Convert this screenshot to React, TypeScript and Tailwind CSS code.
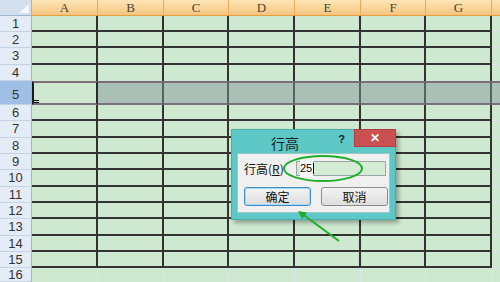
// Excel 2007 sheet with the 行高 (row height) dialog open over it
import React from "react";

const COLS = ["A", "B", "C", "D", "E", "F", "G"];
const COL_W = ["w-[66px]", "w-[66px]", "w-[65px]", "w-[66px]", "w-[66px]", "w-[65px]", "w-[66px]"];
const ROW_H = [
  "h-[16px]", "h-[16px]", "h-[17px]", "h-[16px]", "h-[24px]", "h-[16px]", "h-[17px]", "h-[16px]",
  "h-[16px]", "h-[17px]", "h-[16px]", "h-[16px]", "h-[17px]", "h-[16px]", "h-[16px]", "h-[14px]",
];

// ─── cell borders: A1:G15 has black borders, row 5 is selected and being resized ───
function cellClass(r: number, c: number) {
  const isH = c === 7;
  if (r === 4) {
    if (c === 0)
      return "relative bg-[#cfe9d0] border-l-2 border-l-[#1a1a1a] border-r-2 border-r-[#2a2a2a] border-t-2 border-t-[#7b6f7e] border-b-2 border-b-[#7b6f7e]";
    if (isH) return "bg-[#aabfb6] border-t-2 border-t-[#7b6f7e] border-b-2 border-b-[#7b6f7e]";
    return "bg-[#aabfb6] border-r-2 border-r-[#56645b] border-t-2 border-t-[#7b6f7e] border-b-2 border-b-[#7b6f7e]";
  }
  if (r === 3) return isH ? "bg-[#cfe9d0]" : "bg-[#cfe9d0] border-r-2 border-r-[#333]";
  if (r === 15) return isH ? "bg-[#cfe9d0]" : "bg-[#cfe9d0] border-r border-r-[#dde3ea]";
  return isH
    ? "bg-[#cfe9d0] border-b border-b-[#dde3ea]"
    : "bg-[#cfe9d0] border-r-2 border-b-2 border-[#333]";
}

function HeaderRow() {
  return (
    <div className="flex h-[16px]">
      <div className="relative w-[32px] shrink-0 bg-[#d3dfee] border-r border-b border-[#9eb6ce]">
        <svg className="absolute right-[2px] bottom-[2px]" width="10" height="9" viewBox="0 0 10 9">
          <polygon points="10,0 10,9 0,9" fill="#f4f7fb" />
        </svg>
      </div>
      {COLS.map((c, i) => (
        <div
          key={c}
          className={`${COL_W[i]} shrink-0 flex items-center justify-center bg-linear-to-b from-[#fde6b8] to-[#f6c47f] border-r border-r-[#eaaa58] border-b border-b-[#e49f3e] font-['Liberation_Serif'] text-[13px] text-[#4a4536]`}
        >
          {c}
        </div>
      ))}
      <div className="flex-1 bg-linear-to-b from-[#fde6b8] to-[#f6c47f] border-b border-b-[#e49f3e]" />
    </div>
  );
}

function Dialog() {
  return (
    <div className="absolute left-[231px] top-[129px] w-[165px] h-[91px] flex flex-col bg-[#5dc8c5] border border-[#46aeab] shadow-[3px_3px_4px_rgba(0,0,0,0.3)] font-['Noto_Sans_CJK_SC',sans-serif]">
      {/* title bar */}
      <div className="h-[23px] flex items-start">
        <div className="flex-1 pl-[39px] pt-[5px] text-[14px] leading-[16px] text-[#1e1e1e]">行高</div>
        <div className="pt-[3px] mr-[9px] font-['Liberation_Sans'] text-[11px] leading-[12px] font-bold text-[#1e1e1e]">?</div>
        <div className="-mt-px -mr-px w-[42px] h-[18px] flex items-center justify-center bg-[#c94f50] border border-[#b04040] text-white font-['Liberation_Sans'] text-[12px] font-bold leading-none">
          ✕
        </div>
      </div>

      {/* body */}
      <div className="mx-[5px] mb-[6px] flex-1 bg-[#f0f0f0] border border-[#9cc7c6] pl-[6px] pt-[7px]">
        <div className="flex items-center h-[15px]">
          <div className="w-[52px] text-[12px] leading-[14px] text-[#111]">
            行高(<span className="underline">R</span>)
          </div>
          <div className="w-[90px] h-[15px] flex items-center pl-[3px] bg-[#d3ecd3] border border-[#9aa6a6] font-['Liberation_Sans'] text-[11px] text-black">
            <span className="bg-white pr-px">25</span>
            <span className="w-px h-[11px] bg-black" />
          </div>
        </div>
        <div className="flex gap-[10px] mt-[11px]">
          <div className="w-[67px] h-[19px] flex items-center justify-center rounded-[3px] border border-[#3c8fd0] shadow-[inset_0_0_0_1px_#a9d8f6] bg-linear-to-b from-[#f4f4f4] to-[#dddddd] text-[12px] text-[#111]">
            确定
          </div>
          <div className="w-[67px] h-[19px] flex items-center justify-center rounded-[3px] border border-[#8c8c8c] bg-linear-to-b from-[#f4f4f4] to-[#dddddd] text-[12px] text-[#111]">
            取消
          </div>
        </div>
      </div>
    </div>
  );
}

export default function App() {
  return (
    <div className="relative w-[500px] h-[282px] overflow-hidden bg-[#cfe9d0] select-none">
      <HeaderRow />
      {ROW_H.map((h, r) => (
        <div key={r} className={`flex ${h}`}>
          <div
            className={`w-[32px] shrink-0 flex justify-center border-r border-r-[#9eb6ce] border-b border-b-[#c5d2e2] font-['Liberation_Sans'] text-[13px] leading-[14px] text-[#333] ${
              r === 4 ? "items-end pb-[2px] bg-[#9fbfe6]" : "items-center bg-[#e4ecf7]"
            }`}
          >
            {r + 1}
          </div>
          {[0, 1, 2, 3, 4, 5, 6, 7].map((c) => (
            <div key={c} className={`${c < 7 ? COL_W[c] : "flex-1"} shrink-0 ${cellClass(r, c)}`}>
              {r === 4 && c === 0 && (
                <span className="absolute left-0 bottom-0 w-[5px] h-[3px] border-y border-black" />
              )}
            </div>
          ))}
        </div>
      ))}

      <Dialog />

      {/* ─── annotation: green ellipse + arrow ─── */}
      <svg className="absolute inset-0 pointer-events-none" width="500" height="282" viewBox="0 0 500 282">
        <ellipse cx="323" cy="168.5" rx="39" ry="12.5" fill="none" stroke="#1fae2a" strokeWidth="2" />
        <line x1="339" y1="241" x2="303" y2="214.5" stroke="#1fae2a" strokeWidth="2" />
        <polygon points="298,211 306.8,212.5 302.1,218.9" fill="#1fae2a" />
      </svg>
    </div>
  );
}
